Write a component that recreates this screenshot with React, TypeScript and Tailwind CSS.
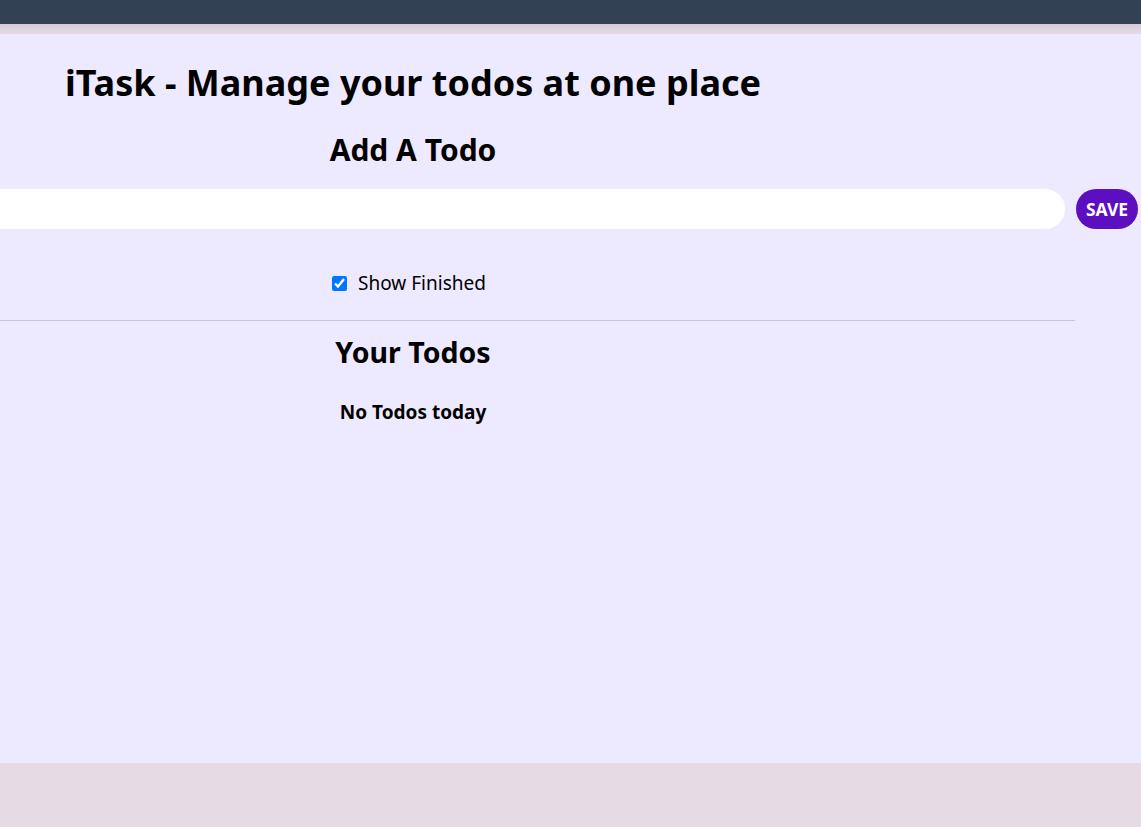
import React, { useState } from "react";

export default function App() {
  const [todo, setTodo] = useState("");
  const [showFinished, setShowFinished] = useState(true);

  return (
    <div
      className="min-h-[827px] w-full overflow-hidden bg-[#e6dbe5] text-black"
      style={{ fontFamily: '"Noto Sans", "Open Sans", sans-serif' }}
    >
      <nav className="h-6 w-full bg-[#334155]" />
      <div className="h-[10px] w-full bg-linear-to-b from-[#d5ccd6] to-[#e6dbe5]" />
      <main className="h-[729px] w-full overflow-hidden bg-[#ede9fe]">
        <div className="ml-[-249px] flex w-[1324px] flex-col items-center">
          <h1 className="mt-[31px] whitespace-nowrap text-[36px] font-bold leading-[36px]">
            iTask - Manage your todos at one place
          </h1>
          <h2 className="mt-[34px] text-[30px] font-bold leading-[30px]">Add A Todo</h2>
          <div className="mt-[24px] flex w-[1387px] gap-[11px] self-start">
            <input
              type="text"
              value={todo}
              onChange={(e) => setTodo(e.target.value)}
              className="h-10 flex-1 rounded-full bg-white px-5 py-1 outline-none"
            />
            <button className="h-10 w-[62px] rounded-full bg-[#5d0ec0] text-[17.5px] font-bold text-white">
              SAVE
            </button>
          </div>
          <label className="ml-[-8px] mt-[42px] flex h-6 items-center gap-[11px] text-[19px] leading-6">
            <input
              type="checkbox"
              checked={showFinished}
              onChange={() => setShowFinished(!showFinished)}
              className="h-[15px] w-[15px]"
            />
            <span>Show Finished</span>
          </label>
          <div className="mt-[25px] h-px w-full bg-[#c9c5d6]" />
          <h2 className="mt-[17px] text-[28.5px] font-bold leading-[28px]">Your Todos</h2>
          <div className="mt-[37px] text-[19px] font-bold leading-[19px]">No Todos today</div>
        </div>
      </main>
    </div>
  );
}
